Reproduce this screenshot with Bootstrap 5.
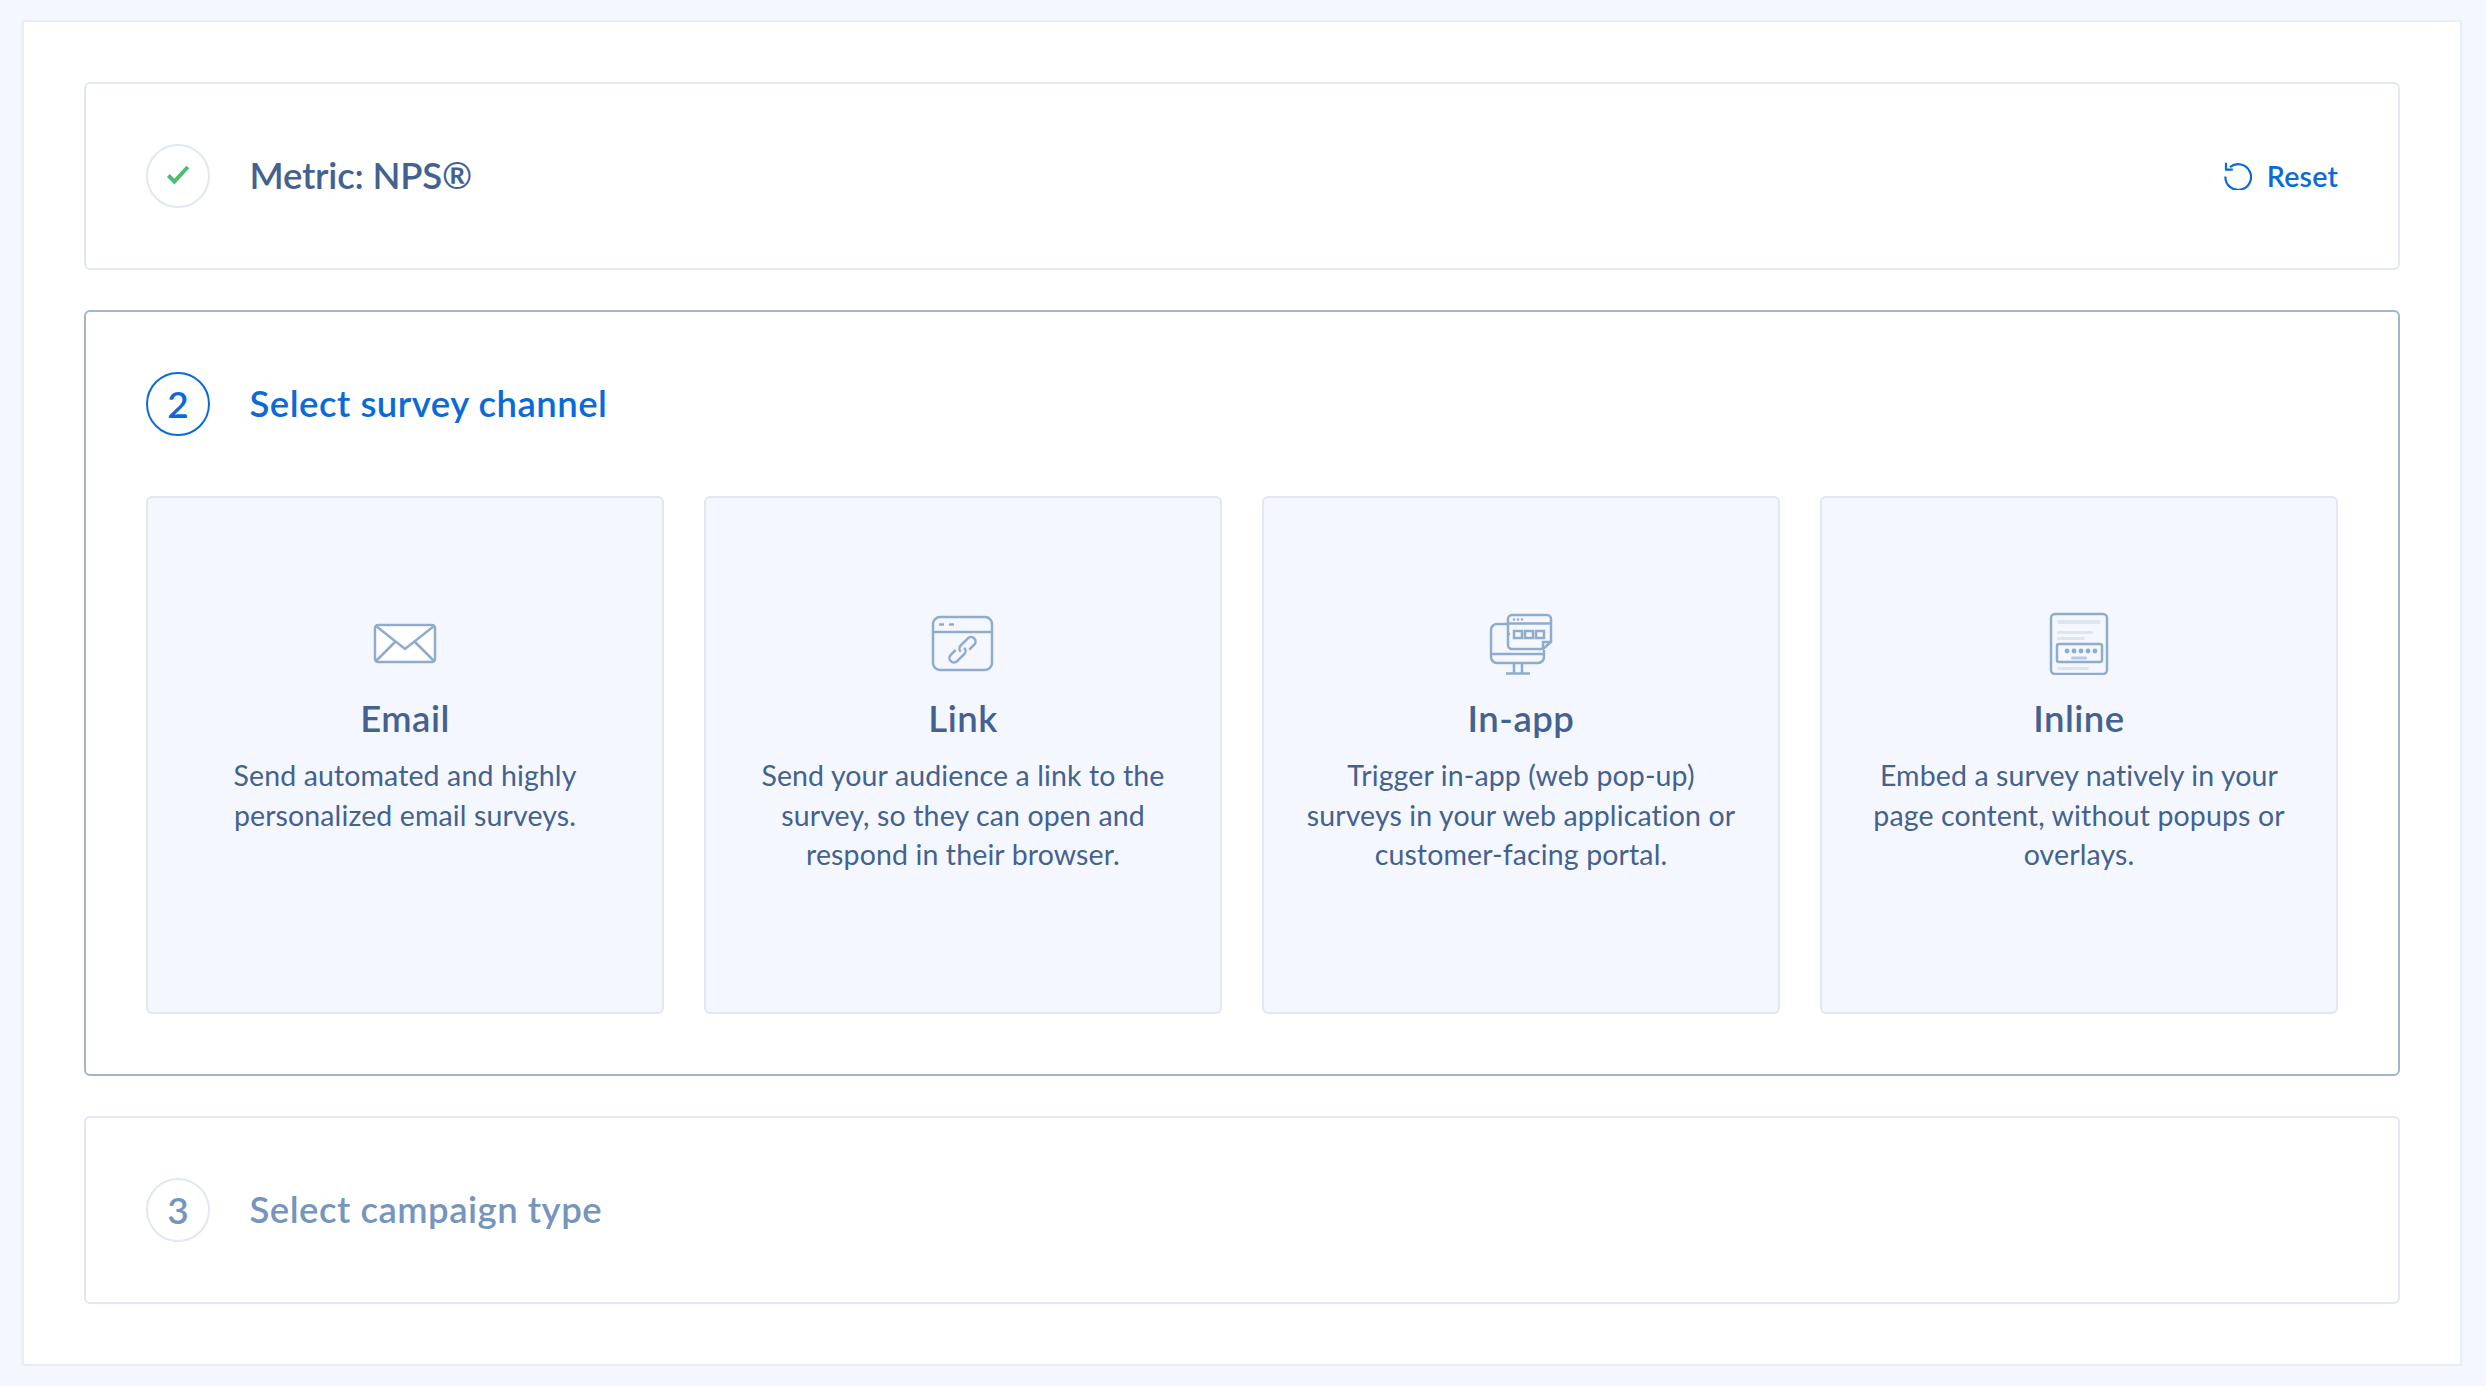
<!DOCTYPE html>
<html lang="en">
<head>
    <meta charset="UTF-8">
    <meta name="viewport" content="width=device-width, initial-scale=1.0">
    <title>Create survey</title>
    <link href="https://cdn.jsdelivr.net/npm/bootstrap@5.3.0/dist/css/bootstrap.min.css" rel="stylesheet">
    <style>
        body {
            background: #f4f8fe;
            font-family: "Lato", "Liberation Sans", sans-serif;
            color: #44618f;
            padding: 20px 24px 0 22px;
            overflow: hidden;
        }
        .shell {
            background: #fff;
            border: 2px solid #e8edf6;
            border-radius: 3px;
            box-shadow: 0 2px 3px #e6ebf5;
            padding: 60px;
            gap: 40px;
        }
        .step {
            --bs-card-border-width: 2px;
            --bs-card-border-color: #e1e8f2;
            --bs-card-border-radius: 6px;
            --bs-card-bg: #fff;
            padding: 60px;
        }
        .step-active {
            --bs-card-border-color: #a3b5c6;
        }
        .step-num {
            width: 64px;
            height: 64px;
            padding-bottom: 2px;
            border: 2px solid #e1e8f2;
            border-radius: 50%;
            font-size: 37px;
            font-weight: 600;
            line-height: 1;
            color: #7595bd;
            flex-shrink: 0;
        }
        .step-active .step-num {
            border-color: #0a6ad8;
            color: #0a6ad8;
        }
        .step-title {
            margin: 0 0 3px 39.5px;
            font-size: 36.5px;
            font-weight: 600;
            line-height: 60px;
            letter-spacing: .5px;
            color: #44618f;
        }
        .step-active .step-title {
            color: #0a6ad8;
        }
        .step-title-done {
            letter-spacing: -.2px;
        }
        .step-title-muted {
            color: #7595bd;
        }
        .reset-link {
            color: #0a6ad8;
            font-size: 28.5px;
            font-weight: 600;
            letter-spacing: .2px;
            text-decoration: none;
            gap: 15px;
        }
        .tile-grid {
            grid-template-columns: repeat(4, 1fr);
            gap: 40px;
            margin-top: 60px;
        }
        .tile {
            aspect-ratio: 1;
            background: #f4f8fe;
            border: 2px solid #e1e8f2;
            border-radius: 6px;
            padding: 113px 36px 0;
            text-align: center;
        }
        .tile-icon {
            display: block;
            margin: 0 auto;
        }
        .tile-name {
            margin: 22px 0 0;
            font-size: 36.5px;
            font-weight: 600;
            line-height: 42px;
            letter-spacing: .5px;
            color: #44618f;
        }
        .tile-desc {
            margin: 17px 0 0;
            font-size: 28.5px;
            line-height: 39.7px;
            letter-spacing: .12px;
            color: #44618f;
        }
        .ico-line {
            fill: none;
            stroke: #8fabcd;
            stroke-width: 2.5;
        }
        .ico-soft {
            fill: #dde5f0;
        }
        .ico-dot {
            fill: #8fabcd;
        }
    </style>
</head>
<body>
    <div class="shell d-flex flex-column">

        <div class="card step flex-row align-items-center">
            <div class="step-num d-flex align-items-center justify-content-center">
                <svg width="24" height="20" viewBox="0 0 24 20"><path d="M2.4 10.5l6 6L21.8 2" fill="none" stroke="#4dbd74" stroke-width="4"/></svg>
            </div>
            <h2 class="step-title step-title-done">Metric: NPS®</h2>
            <a href="#" class="reset-link d-flex align-items-center ms-auto">
                <svg width="28" height="28" viewBox="0 0 28 28" fill="none" stroke="#0a6ad8" stroke-width="2.2"><path d="M6 5.2A12.8 12.8 0 1 1 1.4 14.5"/><path d="M2 0.8V7.6H8.8"/></svg>
                Reset
            </a>
        </div>

        <div class="card step step-active">
            <div class="d-flex align-items-center">
                <div class="step-num d-flex align-items-center justify-content-center">2</div>
                <h2 class="step-title">Select survey channel</h2>
            </div>
            <div class="tile-grid d-grid">
                <div class="tile">
                    <svg class="tile-icon" width="72" height="64" viewBox="0 0 72 64">
                        <rect x="6" y="14" width="60" height="37" rx="3" fill="#fff" stroke="#8fabcd" stroke-width="2.5"/>
                        <path class="ico-line" d="M7 15L36 38L65 15M26 31L7 50M46 31L65 50"/>
                    </svg>
                    <h3 class="tile-name">Email</h3>
                    <p class="tile-desc">Send automated and highly personalized email surveys.</p>
                </div>
                <div class="tile">
                    <svg class="tile-icon" width="72" height="64" viewBox="0 0 72 64">
                        <rect class="ico-line" x="6" y="6" width="59" height="53" rx="7"/>
                        <path class="ico-line" d="M6 21H65"/>
                        <path class="ico-line" d="M12 13.5H17M22 13.5H27"/>
                        <path class="ico-line" transform="translate(30.5 43.5) rotate(-45)" d="M2 -4.5H-5a4.5 4.5 0 0 0 0 9H5a4.5 4.5 0 0 0 4.5-4.5"/>
                        <path class="ico-line" transform="translate(40.5 34) rotate(135)" d="M2 -4.5H-5a4.5 4.5 0 0 0 0 9H5a4.5 4.5 0 0 0 4.5-4.5"/>
                    </svg>
                    <h3 class="tile-name">Link</h3>
                    <p class="tile-desc">Send your audience a link to the survey, so they can open and respond in their browser.</p>
                </div>
                <div class="tile">
                    <svg class="tile-icon" width="72" height="64" viewBox="0 0 72 64">
                        <path class="ico-line" d="M23 13H12a6 6 0 0 0-6 6V46a6 6 0 0 0 6 6H53a6 6 0 0 0 6-6V39"/>
                        <path class="ico-line" d="M6 43H59M29 52V62M37 52V62M21 62.5H45"/>
                        <path class="ico-line" d="M27 4H62a4 4 0 0 1 4 4V31L58 38H27a4 4 0 0 1-4-4V8a4 4 0 0 1 4-4ZM23 12.5H66M66 31H58V38"/>
                        <rect class="ico-line" x="29" y="20" width="8" height="7"/>
                        <rect class="ico-line" x="40" y="20" width="8" height="7"/>
                        <rect class="ico-line" x="51" y="20" width="8" height="7"/>
                        <circle class="ico-dot" cx="29" cy="8.5" r="1.2"/>
                        <circle class="ico-dot" cx="33" cy="8.5" r="1.2"/>
                        <circle class="ico-dot" cx="37" cy="8.5" r="1.2"/>
                        <circle class="ico-dot" cx="24" cy="23" r="1.2"/>
                    </svg>
                    <h3 class="tile-name">In-app</h3>
                    <p class="tile-desc">Trigger in-app (web pop-up) surveys in your web application or customer-facing portal.</p>
                </div>
                <div class="tile">
                    <svg class="tile-icon" width="72" height="64" viewBox="0 0 72 64">
                        <rect class="ico-line" x="8" y="3" width="56" height="60" rx="4"/>
                        <rect class="ico-soft" x="14" y="9" width="44" height="4" rx="2"/>
                        <rect class="ico-soft" x="14" y="20" width="36" height="3" rx="1.5"/>
                        <rect class="ico-soft" x="14" y="26" width="28" height="3" rx="1.5"/>
                        <rect class="ico-line" x="14" y="33" width="45" height="18" rx="2"/>
                        <circle class="ico-dot" cx="24" cy="40" r="2.4"/>
                        <circle class="ico-dot" cx="31" cy="40" r="2.4"/>
                        <circle class="ico-dot" cx="38" cy="40" r="2.4"/>
                        <circle class="ico-dot" cx="45" cy="40" r="2.4"/>
                        <circle class="ico-dot" cx="52" cy="40" r="2.4"/>
                        <rect x="28" y="45.5" width="16" height="3" rx="1.5" fill="#b9c9de"/>
                        <rect class="ico-soft" x="14" y="56" width="32" height="3" rx="1.5"/>
                    </svg>
                    <h3 class="tile-name">Inline</h3>
                    <p class="tile-desc">Embed a survey natively in your page content, without popups or overlays.</p>
                </div>
            </div>
        </div>

        <div class="card step flex-row align-items-center">
            <div class="step-num d-flex align-items-center justify-content-center">3</div>
            <h2 class="step-title step-title-muted">Select campaign type</h2>
        </div>

    </div>
    <script src="https://cdn.jsdelivr.net/npm/bootstrap@5.3.0/dist/js/bootstrap.bundle.min.js"></script>
</body>
</html>
